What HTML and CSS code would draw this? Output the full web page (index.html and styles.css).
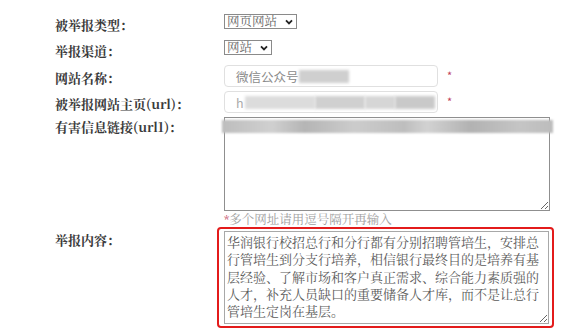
FILE: index.html
```html
<!DOCTYPE html>
<html lang="zh-CN">
<head>
<meta charset="utf-8">
<title>举报表单</title>
<link rel="stylesheet" href="styles.css">
</head>
<body>
<div class="form">
  <div class="row r1">
    <span class="lbl">被举报类型：</span>
    <span class="sel sel-wide">网页网站<svg class="chev" viewBox="0 0 8 6" width="8" height="6"><path d="M1 1.3 L4 4.4 L7 1.3" fill="none" stroke="#222" stroke-width="1.8"/></svg></span>
  </div>
  <div class="row r2">
    <span class="lbl">举报渠道：</span>
    <span class="sel sel-narrow">网站<svg class="chev" viewBox="0 0 8 6" width="8" height="6"><path d="M1 1.3 L4 4.4 L7 1.3" fill="none" stroke="#222" stroke-width="1.8"/></svg></span>
  </div>
  <div class="row r3">
    <span class="lbl">网站名称：</span>
    <div class="input"><span>微信公众号</span><span class="blur b-name"></span></div>
    <span class="req">*</span>
  </div>
  <div class="row r4">
    <span class="lbl">被举报网站主页(url)：</span>
    <div class="input"><span class="h">h</span><span class="blur b-url1"></span><span class="blur b-url2"></span><span class="blur b-url3"></span><span class="blur b-url4"></span></div>
    <span class="req">*</span>
  </div>
  <div class="row r5">
    <span class="lbl">有害信息链接(url1)：</span>
    <div class="ta-wrap">
      <textarea class="ta1" aria-label="有害信息链接"></textarea>
      <span class="ta-blur"></span>
    </div>
  </div>
  <div class="hint"><span class="star">*</span>多个网址请用逗号隔开再输入</div>
  <div class="row r6">
    <span class="lbl">举报内容：</span>
    <div class="mark">
      <textarea class="ta2" aria-label="举报内容">华润银行校招总行和分行都有分别招聘管培生，安排总行管培生到分支行培养，相信银行最终目的是培养有基层经验、了解市场和客户真正需求、综合能力素质强的人才，补充人员缺口的重要储备人才库，而不是让总行管培生定岗在基层。</textarea>
    </div>
  </div>
</div>
</body>
</html>
```

FILE: styles.css
```css
body {
  margin: 0;
  background: #fff;
  font-family: "Noto Sans CJK SC", "Noto Sans", sans-serif;
}

.form {
  padding: 14px 0 0 55px;
}

.row {
  display: flex;
  align-items: flex-start;
}

.lbl {
  width: 169px;
  flex: none;
  font-family: "Noto Serif CJK SC", "Liberation Serif", "Noto Sans CJK SC", serif;
  font-size: 13px;
  line-height: 16px;
  font-weight: 700;
  color: #3a3a3a;
  white-space: nowrap;
}

.r1 { height: 15px; }
.r1 .lbl { padding-top: 3px; }
.r2 { height: 15px; margin-top: 11px; }
.r2 .lbl { padding-top: 3px; }
.r3 { height: 22px; margin-top: 10px; }
.r3 .lbl { padding-top: 5px; }
.r4 { height: 22px; margin-top: 4px; }
.r4 .lbl { padding-top: 5px; }
.r5 { height: 94px; margin-top: 4px; }
.r5 .lbl { padding-top: 2px; }
.r6 .lbl { padding-top: 5px; }

.sel {
  display: inline-flex;
  align-items: center;
  justify-content: space-between;
  height: 15px;
  box-sizing: border-box;
  border: 1px solid #8a8a8a;
  padding: 0 3px 0 2px;
  font-family: "Noto Serif CJK SC", "Liberation Serif", "Noto Sans CJK SC", serif;
  font-size: 12.5px;
  line-height: 13px;
  color: #666;
}

.sel-wide { width: 73px; }
.sel-narrow { width: 48px; }

.chev {
  flex: none;
}

.input {
  width: 214px;
  height: 22px;
  box-sizing: border-box;
  border: 1px solid #e0e0e0;
  border-radius: 4px;
  display: flex;
  align-items: center;
  padding-left: 11px;
  font-size: 12.5px;
  color: #8a8a8a;
  overflow: hidden;
}

.input .h {
  color: #aaa;
  margin-right: 1px;
}

.blur {
  display: inline-block;
  height: 13px;
  background: #cfcfcf;
  filter: blur(1.5px);
}

.b-name { width: 50px; }
.b-url1 { width: 70px; background: #dcdcdc; }
.b-url2 { width: 50px; background: #d0d0d0; }
.b-url3 { width: 30px; background: #d6d6d6; }
.b-url4 { width: 40px; background: #c9c9c9; }

.req {
  color: #c0405a;
  font-size: 11px;
  line-height: 11px;
  margin-left: 9px;
  margin-top: 5px;
}

.ta-wrap {
  position: relative;
  width: 326px;
  height: 94px;
}

.ta1 {
  display: block;
  width: 326px;
  height: 94px;
  box-sizing: border-box;
  margin: 0;
  border: 1px solid #8f8f8f;
  background: #fff;
}

.ta-blur {
  position: absolute;
  left: -2px;
  top: 3px;
  width: 331px;
  height: 13px;
  background: linear-gradient(90deg, #bdbdbd 0%, #d0d0d0 15%, #b5b5b5 25%, #cccccc 40%, #bebebe 55%, #d2d2d2 62%, #b2b2b2 75%, #c5c5c5 90%, #bcbcbc 100%);
  filter: blur(1.2px);
}

.hint {
  margin-left: 169px;
  height: 16px;
  font-family: "Noto Serif CJK SC", "Liberation Serif", "Noto Sans CJK SC", serif;
  font-size: 12.5px;
  line-height: 16px;
  color: #a0a0a0;
  white-space: nowrap;
}

.hint .star {
  color: #c0405a;
  font-size: 11px;
}

.mark {
  margin-left: -7px;
  border: 2px solid #e31b1b;
  border-radius: 4px;
  padding: 2px 3px 2px 5px;
}

.ta2 {
  display: block;
  width: 325px;
  height: 93px;
  box-sizing: border-box;
  margin: 0;
  border: 1px solid #a8a8a8;
  padding: 1px 2px;
  font-family: "Noto Serif CJK SC", "Liberation Serif", "Noto Sans CJK SC", serif;
  font-size: 13px;
  line-height: 17.3px;
  color: #5a5a5a;
  overflow: hidden;
  background: #fff;
}
```
